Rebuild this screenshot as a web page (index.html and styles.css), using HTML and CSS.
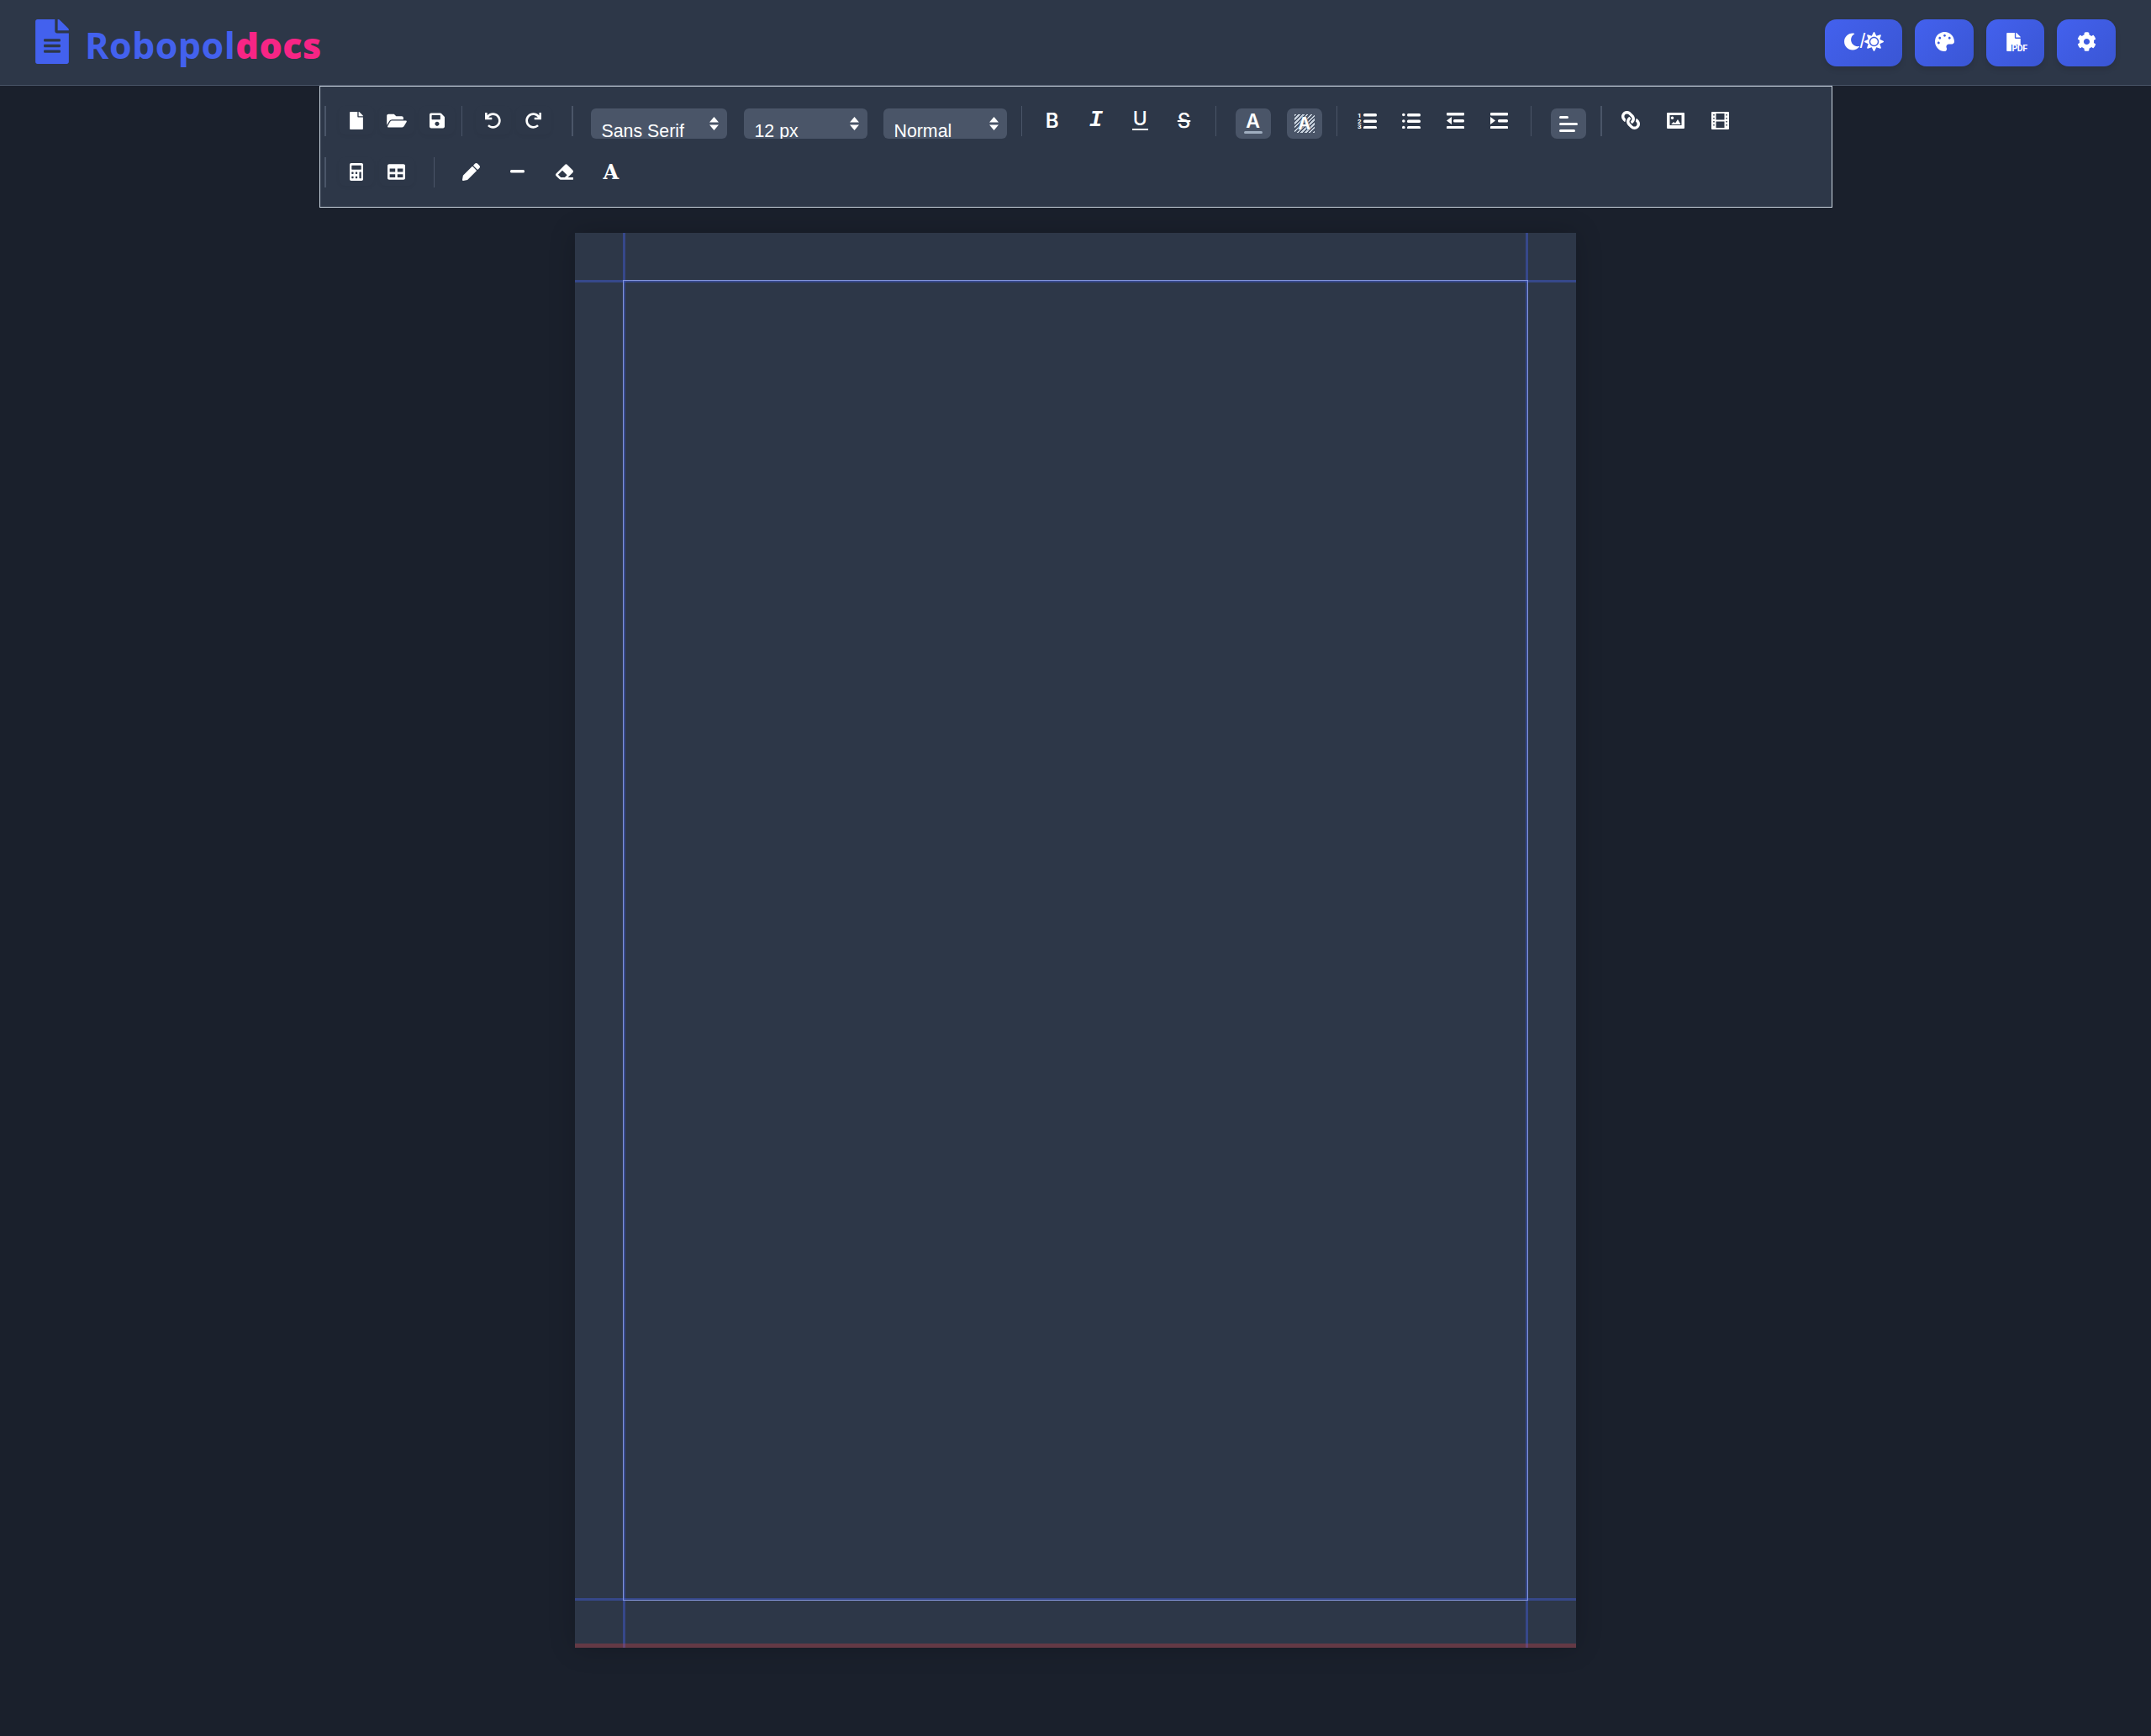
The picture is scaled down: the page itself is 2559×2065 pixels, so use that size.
FILE: index.html
```html
<!DOCTYPE html>
<html>
<head>
    <title>Robopoldocs</title>
    <link rel="stylesheet" href="styles.css">
</head>
<body>
    <header class="topbar">
        <div class="logo">
            <svg class="logo-icon" viewBox="0 0 384 512"><path d="M224 136V0H24C10.7 0 0 10.7 0 24v464c0 13.3 10.7 24 24 24h336c13.3 0 24-10.7 24-24V160H248c-13.2 0-24-10.8-24-24zm64 236c0 6.6-5.4 12-12 12H108c-6.6 0-12-5.4-12-12v-8c0-6.6 5.4-12 12-12h168c6.6 0 12 5.4 12 12v8zm0-64c0 6.6-5.4 12-12 12H108c-6.6 0-12-5.4-12-12v-8c0-6.6 5.4-12 12-12h168c6.6 0 12 5.4 12 12v8zm0-72v8c0 6.6-5.4 12-12 12H108c-6.6 0-12-5.4-12-12v-8c0-6.6 5.4-12 12-12h168c6.6 0 12 5.4 12 12zm96-114.1v6.1H256V0h6.1c6.4 0 12.5 2.5 17 7l97.9 98c4.5 4.5 7 10.6 7 16.9z"/></svg>
            <div class="logo-text">Robopol<span class="logo-accent">docs</span></div>
        </div>
        <div class="actions">
            <button class="action action-theme">
                <svg width="20" height="21" viewBox="0 0 512 512"><path d="M283.211 512c78.962 0 151.079-35.925 198.857-94.792 7.068-8.708-.639-21.43-11.562-19.35-124.203 23.654-238.262-71.576-238.262-196.954 0-72.222 38.662-138.635 101.498-174.394 9.686-5.512 7.25-20.197-3.756-22.23A258.156 258.156 0 0 0 283.211 0c-141.309 0-256 114.511-256 256 0 141.309 114.511 256 256 256z"/></svg>
                <span class="slash">/</span>
                <svg width="23" height="23" viewBox="0 0 512 512"><path d="M256 160c-52.9 0-96 43.1-96 96s43.1 96 96 96 96-43.1 96-96-43.1-96-96-96zm246.4 80.5l-94.7-47.3 33.5-100.4c4.5-13.6-8.4-26.5-21.9-21.9l-100.4 33.5-47.4-94.8c-6.4-12.8-24.6-12.8-31 0l-47.3 94.7L92.7 70.8c-13.6-4.5-26.5 8.4-21.9 21.9l33.5 100.4-94.7 47.4c-12.8 6.4-12.8 24.6 0 31l94.7 47.3-33.5 100.5c-4.5 13.6 8.4 26.5 21.9 21.9l100.4-33.5 47.3 94.7c6.4 12.8 24.6 12.8 31 0l47.3-94.7 100.4 33.5c13.6 4.5 26.5-8.4 21.9-21.9l-33.5-100.4 94.7-47.3c13-6.5 13-24.7.2-31.1zm-155.9 106c-49.9 49.9-131.1 49.9-181 0-49.9-49.9-49.9-131.1 0-181 49.9-49.9 131.1-49.9 181 0 49.9 49.9 49.9 131.1 0 181z"/></svg>
            </button>
            <button class="action action-70">
                <svg width="23" height="23" viewBox="0 0 512 512"><path d="M204.3 5C104.9 24.4 24.8 104.3 5.2 203.4c-37 187 131.7 326.4 258.8 306.7 41.2-6.4 61.4-54.6 42.5-91.7-23.1-45.4 9.9-98.4 60.9-98.4h79.7c35.8 0 64.8-29.6 64.9-65.3C511.5 97.1 368.1-26.9 204.3 5zM96 320c-17.7 0-32-14.3-32-32s14.3-32 32-32 32 14.3 32 32-14.3 32-32 32zm32-128c-17.7 0-32-14.3-32-32s14.3-32 32-32 32 14.3 32 32-14.3 32-32 32zm128-64c-17.7 0-32-14.3-32-32s14.3-32 32-32 32 14.3 32 32-14.3 32-32 32zm128 64c-17.7 0-32-14.3-32-32s14.3-32 32-32 32 14.3 32 32-14.3 32-32 32z"/></svg>
            </button>
            <button class="action action-69">
                <span class="pdf-icon">
                    <svg width="17" height="22" viewBox="0 0 384 512"><path d="M224 136V0H24C10.7 0 0 10.7 0 24v464c0 13.3 10.7 24 24 24h336c13.3 0 24-10.7 24-24V160H248c-13.2 0-24-10.8-24-24zm160-14.1v6.1H256V0h6.1c6.4 0 12.5 2.5 17 7l97.9 98c4.5 4.5 7 10.6 7 16.9z"/></svg>
                    <span class="pdf-label">PDF</span>
                </span>
            </button>
            <button class="action action-70">
                <svg width="23" height="23" viewBox="0 0 512 512"><path d="M487.4 315.7l-42.6-24.6c4.3-23.2 4.3-47 0-70.2l42.6-24.6c4.9-2.8 7.1-8.6 5.5-14-11.1-35.6-30-67.8-54.7-94.6-3.8-4.1-10-5.1-14.8-2.3L380.8 110c-17.9-15.4-38.5-27.3-60.8-35.1V25.8c0-5.6-3.9-10.5-9.4-11.7-36.7-8.2-74.3-7.8-109.2 0-5.5 1.2-9.4 6.1-9.4 11.7V75c-22.2 7.9-42.8 19.8-60.8 35.1L88.7 85.5c-4.9-2.8-11-1.9-14.8 2.3-24.7 26.7-43.6 58.9-54.7 94.6-1.7 5.4.6 11.2 5.5 14L67.3 221c-4.3 23.2-4.3 47 0 70.2l-42.6 24.6c-4.9 2.8-7.1 8.6-5.5 14 11.1 35.6 30 67.8 54.7 94.6 3.8 4.1 10 5.1 14.8 2.3l42.6-24.6c17.9 15.4 38.5 27.3 60.8 35.1v49.2c0 5.6 3.9 10.5 9.4 11.7 36.7 8.2 74.3 7.8 109.2 0 5.5-1.2 9.4-6.1 9.4-11.7v-49.2c22.2-7.9 42.8-19.8 60.8-35.1l42.6 24.6c4.9 2.8 11 1.9 14.8-2.3 24.7-26.7 43.6-58.9 54.7-94.6 1.5-5.5-.7-11.3-5.6-14.1zM256 336c-44.1 0-80-35.9-80-80s35.9-80 80-80 80 35.9 80 80-35.9 80-80 80z"/></svg>
            </button>
        </div>
    </header>

    <div class="toolbar">
        <div class="tool-row">
            <span class="sep sep-bold sep-first"></span>
            <button class="tool tool-sm"><svg width="16" height="21" viewBox="0 0 384 512"><path d="M224 136V0H24C10.7 0 0 10.7 0 24v464c0 13.3 10.7 24 24 24h336c13.3 0 24-10.7 24-24V160H248c-13.2 0-24-10.8-24-24zm160-14.1v6.1H256V0h6.1c6.4 0 12.5 2.5 17 7l97.9 98c4.5 4.5 7 10.6 7 16.9z"/></svg></button>
            <button class="tool tool-sm"><svg width="24" height="21" viewBox="0 0 576 512"><path d="M572.694 292.093L500.27 416.248A63.997 63.997 0 0 1 444.989 448H45.025c-18.523 0-30.064-20.093-20.731-36.093l72.424-124.155A64 64 0 0 1 152 256h399.964c18.523 0 30.064 20.093 20.73 36.093zM152 224h328v-48c0-26.51-21.49-48-48-48H272l-64-64H48C21.49 64 0 85.49 0 112v278.046l69.077-118.418C86.214 242.25 117.989 224 152 224z"/></svg></button>
            <button class="tool tool-sm"><svg width="18" height="21" viewBox="0 0 448 512"><path d="M433.941 129.941l-83.882-83.882A48 48 0 0 0 316.118 32H48C21.49 32 0 53.49 0 80v352c0 26.51 21.49 48 48 48h352c26.51 0 48-21.49 48-48V163.882a48 48 0 0 0-14.059-33.941zM224 416c-35.346 0-64-28.654-64-64 0-35.346 28.654-64 64-64s64 28.654 64 64c0 35.346-28.654 64-64 64zm96-304.52V212c0 6.627-5.373 12-12 12H76c-6.627 0-12-5.373-12-12V108c0-6.627 5.373-12 12-12h228.52c3.183 0 6.235 1.264 8.485 3.515l3.48 3.48A11.996 11.996 0 0 1 320 111.48z"/></svg></button>
            <span class="sep sep-history"></span>
            <button class="tool tool-sm"><svg width="19" height="19" viewBox="0 0 512 512"><path d="M212.333 224.333H12c-6.627 0-12-5.373-12-12V12C0 5.373 5.373 0 12 0h48c6.627 0 12 5.373 12 12v78.112C117.773 39.279 184.26 7.47 258.175 8.007c136.906.994 246.448 111.623 246.157 248.532C504.041 393.258 393.12 504 256.333 504c-64.089 0-122.496-24.313-166.51-64.215-5.099-4.622-5.334-12.554-.467-17.42l33.967-33.967c4.474-4.474 11.662-4.717 16.401-.525C170.76 415.336 211.58 432 256.333 432c97.268 0 176-78.716 176-176 0-97.267-78.716-176-176-176-58.496 0-110.28 28.476-142.274 72.333h98.274c6.627 0 12 5.373 12 12v48c0 6.627-5.373 12-12 12z"/></svg></button>
            <button class="tool tool-sm"><svg width="19" height="19" viewBox="0 0 512 512"><path d="M500.33 0h-47.41a12 12 0 0 0-12 12.57l4 82.76A247.42 247.42 0 0 0 256 8C119.34 8 7.9 119.53 8 256.19 8.1 393.07 119.1 504 256 504a247.1 247.1 0 0 0 166.18-63.91 12 12 0 0 0 .48-17.43l-34-34a12 12 0 0 0-16.38-.55A176 176 0 1 1 402.1 157.8l-101.53-4.87a12 12 0 0 0-12.57 12v47.41a12 12 0 0 0 12 12h200.33a12 12 0 0 0 12-12V12a12 12 0 0 0-12-12z"/></svg></button>
            <span class="sep sep-bold sep-fonts"></span>

            <div class="picker picker-font"><span>Sans Serif</span><svg class="picker-arrows" width="11" height="16" viewBox="0 0 11 16"><path d="M5.500 0l5.500 6.500H0zM0 9.500h11L5.500 16z"/></svg></div>
            <div class="picker picker-size"><span>12 px</span><svg class="picker-arrows" width="11" height="16" viewBox="0 0 11 16"><path d="M5.500 0l5.500 6.500H0zM0 9.500h11L5.500 16z"/></svg></div>
            <div class="picker picker-size picker-last"><span>Normal</span><svg class="picker-arrows" width="11" height="16" viewBox="0 0 11 16"><path d="M5.500 0l5.500 6.500H0zM0 9.500h11L5.500 16z"/></svg></div>
            <span class="sep"></span>

            <button class="tool tool-letter tool-bold">B</button>
            <button class="tool tool-letter tool-italic">I</button>
            <button class="tool tool-letter tool-underline"><span>U</span></button>
            <button class="tool tool-letter tool-strike"><span>S</span></button>
            <span class="sep"></span>

            <button class="swatch"><span class="swatch-letter">A</span><span class="swatch-bar"></span></button>
            <button class="swatch"><span class="hatch"><span class="hatch-letter">A</span></span></button>
            <span class="sep"></span>

            <button class="tool">
                <svg width="24" height="20" viewBox="0 0 24 20"><text class="tiny-num" x="0" y="6.500">1</text><text class="tiny-num" x="0" y="13.500">2</text><text class="tiny-num" x="0" y="20">3</text><rect x="7" y="2" width="16" height="3.400" rx="1.500"/><rect x="7" y="9.500" width="16" height="3.400" rx="1.500"/><rect x="7" y="17" width="16" height="3.400" rx="1.500"/></svg>
            </button>
            <button class="tool">
                <svg width="22" height="20" viewBox="0 0 22 20"><circle cx="1.800" cy="3.500" r="1.800"/><circle cx="1.800" cy="11" r="1.800"/><circle cx="1.800" cy="18.500" r="1.800"/><rect x="6" y="2" width="16" height="3.400" rx="1.500"/><rect x="6" y="9.500" width="16" height="3.400" rx="1.500"/><rect x="6" y="17" width="16" height="3.400" rx="1.500"/></svg>
            </button>
            <button class="tool">
                <svg width="21" height="20" viewBox="0 0 21 20"><rect x="0" y="1" width="21" height="3.400" rx="1"/><rect x="8" y="9" width="13" height="3.400" rx="1.500"/><rect x="0" y="17" width="21" height="3.400" rx="1"/><path d="M6 6v9l-6-4.500z"/></svg>
            </button>
            <button class="tool">
                <svg width="21" height="20" viewBox="0 0 21 20"><rect x="0" y="1" width="21" height="3.400" rx="1"/><rect x="9" y="9" width="12" height="3.400" rx="1.500"/><rect x="0" y="17" width="21" height="3.400" rx="1"/><path d="M0 6v9l6-4.500z"/></svg>
            </button>
            <span class="sep"></span>

            <button class="swatch">
                <svg width="22" height="19" viewBox="0 0 22 19"><rect x="0" y="0" width="11" height="3" rx="1.500"/><rect x="0" y="8" width="22" height="3" rx="1.500"/><rect x="0" y="16" width="19" height="3" rx="1.500"/></svg>
            </button>
            <span class="sep sep-bold sep-media"></span>

            <button class="tool tool-link"><svg class="flip" width="22" height="22" viewBox="0 0 512 512"><path d="M326.612 185.391c59.747 59.809 58.927 155.698.36 214.59-.11.12-.24.25-.36.37l-67.2 67.2c-59.27 59.27-155.699 59.262-214.96 0-59.27-59.26-59.27-155.7 0-214.96l37.106-37.106c9.84-9.84 26.786-3.3 27.294 10.606.648 17.722 3.826 35.527 9.69 52.721 1.986 5.822.567 12.262-3.783 16.612l-13.087 13.087c-28.026 28.026-28.905 73.66-1.155 101.96 28.024 28.579 74.086 28.749 102.325.51l67.2-67.19c28.191-28.191 28.073-73.757 0-101.83-3.701-3.694-7.429-6.564-10.341-8.569a16.037 16.037 0 0 1-6.947-12.606c-.396-10.567 3.348-21.456 11.698-29.806l21.054-21.055c5.521-5.521 14.182-6.199 20.584-1.731a152.482 152.482 0 0 1 20.522 17.197zM467.547 44.449c-59.261-59.262-155.69-59.27-214.96 0l-67.2 67.2c-.12.12-.25.25-.36.37-58.566 58.892-59.387 154.781.36 214.59a152.454 152.454 0 0 0 20.521 17.196c6.402 4.468 15.064 3.789 20.584-1.731l21.054-21.055c8.35-8.35 12.094-19.239 11.698-29.806a16.037 16.037 0 0 0-6.947-12.606c-2.912-2.005-6.64-4.875-10.341-8.569-28.073-28.073-28.191-73.639 0-101.83l67.2-67.19c28.239-28.239 74.3-28.069 102.325.51 27.75 28.3 26.872 73.934-1.155 101.96l-13.087 13.087c-4.35 4.35-5.769 10.79-3.783 16.612 5.864 17.194 9.042 34.999 9.69 52.721.509 13.906 17.454 20.446 27.294 10.606l37.106-37.106c59.271-59.259 59.271-155.699.001-214.959z"/></svg></button>
            <button class="tool">
                <svg width="21" height="19" viewBox="0 0 21 19"><path fill-rule="evenodd" d="M1 0h19a1 1 0 0 1 1 1v17a1 1 0 0 1-1 1H1a1 1 0 0 1-1-1V1a1 1 0 0 1 1-1zm2.500 3v12h14V3zM6.500 4.500a1.800 1.800 0 1 1 0 3.600 1.800 1.800 0 0 1 0-3.600zM5 14l3-3 2 1.500 3-4.500 3.500 6z"/></svg>
            </button>
            <button class="tool">
                <svg width="21" height="21" viewBox="0 0 21 21"><path fill-rule="evenodd" d="M1 0h19a1 1 0 0 1 1 1v19a1 1 0 0 1-1 1H1a1 1 0 0 1-1-1V1a1 1 0 0 1 1-1zm4.500 2v7.500h10V2zm0 9.500V19h10v-7.500zM2.200 3v1.500h1.500V3zm0 4v1.500h1.500V7zm0 4v1.500h1.500V11zm0 4v1.500h1.500V15zM17.300 3v1.500h1.500V3zm0 4v1.500h1.500V7zm0 4v1.500h1.500V11zm0 4v1.500h1.500V15z"/></svg>
            </button>
        </div>
        <div class="tool-row">
            <span class="sep sep-bold sep-first"></span>
            <button class="tool tool-sm"><svg width="16" height="21" viewBox="0 0 448 512" preserveAspectRatio="none"><path d="M400 0H48C22.400 0 0 22.400 0 48v416c0 25.600 22.400 48 48 48h352c25.600 0 48-22.400 48-48V48C448 22.400 425.600 0 400 0zM128 435c0 6.400-6.400 12.800-12.800 12.800H76.800c-6.400 0-12.800-6.400-12.800-12.800v-38.400c0-6.400 6.400-12.800 12.800-12.800h38.400c6.400 0 12.800 6.400 12.800 12.800V435zm0-128c0 6.400-6.400 12.800-12.800 12.800H76.800c-6.400 0-12.800-6.400-12.800-12.800v-38.400c0-6.400 6.400-12.800 12.800-12.800h38.400c6.400 0 12.800 6.400 12.800 12.800V307zm128 128c0 6.400-6.400 12.800-12.800 12.800h-38.400c-6.400 0-12.800-6.400-12.800-12.800v-38.400c0-6.400 6.400-12.800 12.800-12.800h38.400c6.400 0 12.800 6.400 12.800 12.800V435zm0-128c0 6.400-6.400 12.800-12.800 12.800h-38.400c-6.400 0-12.800-6.400-12.800-12.800v-38.400c0-6.400 6.400-12.800 12.800-12.800h38.400c6.400 0 12.800 6.400 12.800 12.800V307zm128 128c0 6.400-6.400 12.800-12.800 12.800h-38.400c-6.400 0-12.800-6.400-12.800-12.800V268.800c0-6.400 6.400-12.800 12.800-12.800h38.400c6.400 0 12.800 6.400 12.800 12.800V435zm0-256c0 6.400-6.400 12.800-12.800 12.800H76.800c-6.400 0-12.800-6.400-12.800-12.800V76.800C64 70.400 70.400 64 76.800 64h294.400c6.400 0 12.800 6.400 12.800 12.800V179z"/></svg></button>
            <button class="tool tool-sm"><svg width="21" height="21" viewBox="0 0 512 512"><path d="M464 32H48C21.490 32 0 53.490 0 80v352c0 26.510 21.490 48 48 48h416c26.510 0 48-21.490 48-48V80c0-26.510-21.490-48-48-48zM224 416H64v-96h160v96zm0-160H64v-96h160v96zm224 160H288v-96h160v96zm0-160H288v-96h160v96z"/></svg></button>
            <span class="sep sep-draw"></span>
            <button class="tool tool-draw"><svg width="21" height="21" viewBox="0 0 512 512"><path d="M497.900 142.100l-46.100 46.100c-4.700 4.700-12.300 4.700-17 0l-111-111c-4.700-4.700-4.700-12.300 0-17l46.100-46.100c18.700-18.700 49.100-18.700 67.900 0l60.100 60.100c18.800 18.700 18.800 49.100 0 67.900zM284.200 99.800L21.600 362.400.4 483.900c-2.900 16.400 11.400 30.600 27.800 27.800l121.500-21.300 262.600-262.600c4.700-4.700 4.700-12.300 0-17l-111-111c-4.800-4.700-12.400-4.700-17.100 0z"/></svg></button>
            <button class="tool tool-draw"><svg width="17" height="4" viewBox="0 0 17 4"><rect width="17" height="3.500" rx="1.500"/></svg></button>
            <button class="tool tool-draw"><svg width="21" height="21" viewBox="0 0 512 512"><path d="M497.941 273.941c18.745-18.745 18.745-49.137 0-67.882l-160-160c-18.745-18.745-49.137-18.745-67.882 0l-256 256c-18.745 18.745-18.745 49.137 0 67.882l96 96A48.004 48.004 0 0 0 144 480h356c6.627 0 12-5.373 12-12v-40c0-6.627-5.373-12-12-12H355.883l142.058-142.059zm-302.627-62.627l137.373 137.373L265.373 416H150.628l-80-80 124.686-124.686z"/></svg></button>
            <button class="tool tool-draw tool-letter tool-font"><span>A</span></button>
        </div>
    </div>

    <main class="workspace">
        <div class="page">
            <span class="guide guide-left"></span>
            <span class="guide guide-right"></span>
            <span class="guide guide-top"></span>
            <span class="guide guide-bottom"></span>
            <div class="page-body"></div>
            <span class="page-end"></span>
        </div>
    </main>
</body>
</html>
```

FILE: styles.css
```css
* {
    box-sizing: border-box;
}

body {
    margin: 0;
    min-height: 100vh;
    background-color: #1a202c;
    font-family: "Liberation Sans", Arial, sans-serif;
    overflow: hidden;
}

svg {
    fill: #ffffff;
    display: block;
}

button {
    border: none;
    padding: 0;
    color: white;
    background: none;
}

/* top bar */
.topbar {
    height: 102px;
    padding: 1px 42px 0;
    display: flex;
    justify-content: space-between;
    align-items: center;
    background-color: #2d3748;
    border-bottom: 1px solid #4a5568;
}

.logo {
    display: flex;
    align-items: center;
    gap: 19px;
}

.logo-icon {
    width: 40px;
    height: 53px;
    margin-top: -4px;
    fill: #4361ee;
}

.logo-text {
    font-family: "Open Sans", sans-serif;
    font-size: 43px;
    font-weight: 700;
    line-height: 56px;
    padding-top: 6px;
    letter-spacing: 0.5px;
    color: #4361ee;
}

.logo-accent {
    font-weight: 800;
    color: #f72585;
}

.actions {
    display: flex;
    gap: 15px;
}

.action {
    height: 56px;
    padding-bottom: 3px;
    display: flex;
    align-items: center;
    justify-content: center;
    border-radius: 14px;
    background: linear-gradient(135deg, #4361ee, #3a56d4);
    box-shadow: 0 4px 6px rgba(0, 0, 0, 0.1);
}

.action-theme {
    width: 92px;
}

.action-70 {
    width: 70px;
}

.action-69 {
    width: 69px;
}

.slash {
    font-size: 23px;
    margin: 0 -1px 0 0;
}

.pdf-icon {
    position: relative;
    display: block;
    width: 22px;
}

.pdf-label {
    position: absolute;
    left: 6px;
    top: 14px;
    padding: 0 0 0 1px;
    font-family: "Roboto", sans-serif;
    font-size: 10.5px;
    font-weight: 700;
    line-height: 9px;
    letter-spacing: -0.4px;
    background-color: #3f5be1;
}

/* editor toolbar */
.toolbar {
    width: 1800px;
    height: 145px;
    margin: 0 auto;
    padding: 23px 0 0 5px;
    background-color: #2d3748;
    border: 1px solid #cbd5e0;
    display: flex;
    flex-direction: column;
    gap: 25px;
}

.tool-row {
    display: flex;
    align-items: flex-start;
    height: 36px;
}

.sep {
    flex: none;
    width: 1px;
    height: 36px;
    margin: 0 10px 0 11px;
    background-color: #4a5568;
}

.sep-bold {
    width: 2px;
}

.sep-first {
    margin: 0 12px 0 0;
}

.sep-history {
    margin: 0 13px 0 5px;
}

.sep-fonts {
    margin: 0 21px;
}

.sep-media {
    margin: 0 8px 0 11px;
}

.sep-draw {
    margin: 0 16px 0 20px;
}

.tool {
    flex: none;
    width: 52.300px;
    height: 34px;
    display: flex;
    align-items: center;
    justify-content: center;
}

.tool-sm {
    width: 42px;
    margin: 0 3px;
    border-radius: 8px;
    box-shadow: 0 2px 4px rgba(0, 0, 0, 0.04);
}

.tool-draw {
    width: 55.500px;
}

.tool-link {
    margin-right: 1.500px;
}

.tool-letter {
    font-size: 24px;
    line-height: 34px;
}

.tool-bold {
    font-family: "Inter", sans-serif;
    font-weight: 600;
    padding-top: 1px;
}

.tool-italic {
    font-family: "Liberation Mono", monospace;
    font-style: italic;
    font-weight: 700;
    font-size: 27px;
}

.tool-underline span {
    font-family: "Inter", sans-serif;
    font-size: 23px;
    font-weight: 500;
    line-height: 22px;
    padding: 0 1px 1px;
    margin-top: -1px;
    border-bottom: 2px solid #ffffff;
}

.tool-strike span {
    font-family: "Inter", sans-serif;
    font-size: 24px;
    font-weight: 500;
    padding: 1px 1px 0;
    text-decoration: line-through;
    text-decoration-thickness: 2px;
}

.tool-font {
    font-family: "DejaVu Serif", serif;
    font-weight: 700;
    font-size: 24px;
}

.tool-font span {
    padding-top: 2px;
}

.flip {
    transform: scaleX(-1);
}

.tiny-num {
    font-family: "Roboto", sans-serif;
    font-size: 8px;
    font-weight: 700;
    fill: #ffffff;
}

.picker {
    flex: none;
    width: 162px;
    height: 36px;
    margin: 3px 20px 0 0;
    padding: 11px 0 0 13px;
    position: relative;
    overflow: hidden;
    background-color: #4a5568;
    border-radius: 6px;
    color: white;
    font-size: 21.330px;
    line-height: 32px;
}

.picker-size {
    width: 147px;
    margin-right: 19px;
}

.picker-last {
    margin-right: 6px;
}

.picker-arrows {
    position: absolute;
    top: 10px;
    right: 10px;
}

.swatch {
    flex: none;
    width: 42px;
    height: 36px;
    margin: 3px 6px 0 13px;
    display: flex;
    flex-direction: column;
    align-items: center;
    justify-content: center;
    border-radius: 7px;
    background-color: #4a5568;
}

.swatch-letter {
    font-family: "Inter", sans-serif;
    font-size: 23px;
    font-weight: 600;
    line-height: 20px;
}

.swatch-bar {
    width: 22px;
    height: 3px;
    margin-top: 2px;
    margin-bottom: 2px;
    border-radius: 2px;
    background-color: #a0aec0;
}

.hatch {
    width: 24px;
    height: 22px;
    display: flex;
    align-items: center;
    justify-content: center;
    background: repeating-linear-gradient(135deg, #cbd5e0 0, #cbd5e0 1.700px, transparent 1.700px, transparent 3.400px);
}

.hatch-letter {
    font-family: "Inter", sans-serif;
    font-size: 20px;
    font-weight: 700;
    line-height: 20px;
    padding: 0 1px;
    text-shadow: 0 0 2px #4a5568, 0 0 2px #4a5568;
}

/* document page */
.workspace {
    padding-top: 30px;
    display: flex;
    justify-content: center;
}

.page {
    position: relative;
    width: 1191px;
    height: 1683px;
    padding: 56px 57px;
    background-color: #2d3748;
    box-shadow: 0 0 30px rgba(0, 0, 0, 0.2);
}

.page-body {
    position: relative;
    height: 100%;
    border: 1px solid #8596dc;
}

.guide {
    position: absolute;
    background-color: rgba(67, 97, 238, 0.4);
}

.guide-left,
.guide-right {
    top: 0;
    bottom: 0;
    width: 3px;
}

.guide-left {
    left: 57px;
}

.guide-right {
    right: 57px;
}

.guide-top,
.guide-bottom {
    left: 0;
    right: 0;
    height: 3px;
}

.guide-top {
    top: 56px;
}

.guide-bottom {
    bottom: 56px;
}

.page-end {
    position: absolute;
    left: 0;
    right: 0;
    bottom: 0;
    height: 5px;
    background-color: rgba(229, 62, 62, 0.3);
}
```
